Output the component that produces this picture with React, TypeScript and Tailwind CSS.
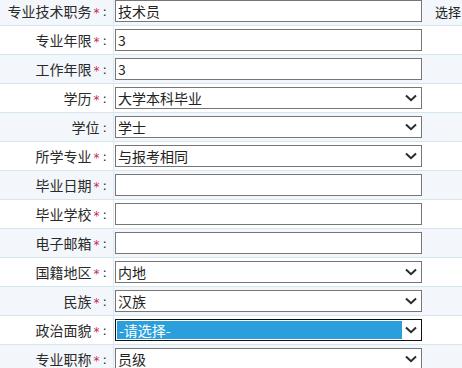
import React from "react";

type Row = {
  label: string;
  req: boolean;
  kind: "input" | "select";
  value: string;
  focused?: boolean;
  extra?: string;
};

const rows: Row[] = [
  { label: "专业技术职务", req: true, kind: "input", value: "技术员", extra: "选择" },
  { label: "专业年限", req: true, kind: "input", value: "3" },
  { label: "工作年限", req: true, kind: "input", value: "3" },
  { label: "学历", req: true, kind: "select", value: "大学本科毕业" },
  { label: "学位", req: false, kind: "select", value: "学士" },
  { label: "所学专业", req: true, kind: "select", value: "与报考相同" },
  { label: "毕业日期", req: true, kind: "input", value: "" },
  { label: "毕业学校", req: true, kind: "input", value: "" },
  { label: "电子邮箱", req: true, kind: "input", value: "" },
  { label: "国籍地区", req: true, kind: "select", value: "内地" },
  { label: "民族", req: true, kind: "select", value: "汉族" },
  { label: "政治面貌", req: true, kind: "select", value: "-请选择-", focused: true },
  { label: "专业职称", req: true, kind: "select", value: "员级" },
];

function Chevron() {
  return (
    <svg width="12" height="8" viewBox="0 0 12 8" className="shrink-0">
      <path d="M1 1.5 L6 6.2 L11 1.5" fill="none" stroke="#2a2a2a" strokeWidth="2" />
    </svg>
  );
}

export default function App() {
  return (
    <div
      className="w-[462px] h-[368px] overflow-hidden bg-white text-[#222]"
      style={{ fontFamily: '"Noto Sans CJK SC", "Noto Sans", sans-serif' }}
    >
      <div className="mt-[-4px] flex flex-col">
        {rows.map((r, i) => (
          <div
            key={r.label}
            className={`flex h-[29px] border-t border-[#d6e6ed] ${i % 2 === 0 ? "bg-[#f3f7fb]" : "bg-white"}`}
          >
            <div className="w-[114px] shrink-0 border-r border-[#dde9ef] flex items-center justify-end pr-[6px] text-[14px] leading-none text-[#2a2a2a]">
              <span>{r.label}</span>
              {r.req && (
                <span className="text-[#c8285f] ml-[2px] translate-y-[2px]" style={{ fontFamily: '"DejaVu Sans", sans-serif', fontSize: "12px" }}>
                  *
                </span>
              )}
              <span className="ml-[3px]" style={{ fontFamily: '"DejaVu Sans", sans-serif', fontSize: "13px" }}>:</span>
            </div>
            <div className="flex items-center pl-[1px]">
              {r.kind === "input" ? (
                <div className="w-[307px] h-[22px] border border-[#767676] bg-white flex items-center pl-[2px] text-[14px] leading-none">
                  {r.value}
                </div>
              ) : (
                <div
                  className={`w-[307px] h-[22px] border bg-white flex items-center text-[14px] leading-none ${
                    r.focused ? "border-[#111]" : "border-[#767676]"
                  }`}
                >
                  <div
                    className={`flex-1 flex items-center pl-[2px] ${
                      r.focused ? "bg-[#2a9fdc] text-white ml-[1px] mr-[2px] h-[18px]" : "h-full"
                    }`}
                  >
                    {r.value}
                  </div>
                  <div className="w-[17px] flex items-center justify-center pr-[3px]">
                    <Chevron />
                  </div>
                </div>
              )}
              {r.extra && <span className="ml-[13px] text-[13px] leading-none">{r.extra}</span>}
            </div>
          </div>
        ))}
      </div>
    </div>
  );
}
